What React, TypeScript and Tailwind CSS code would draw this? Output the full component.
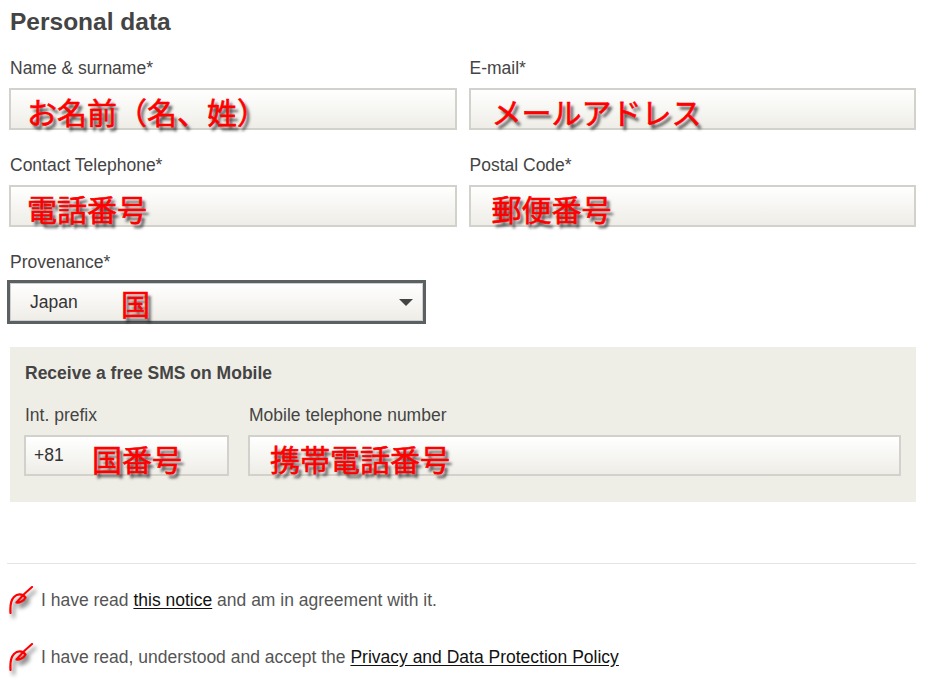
import type { ReactNode } from "react";

const red =
  "text-[#ff0000] [text-shadow:3px_4px_3px_rgba(0,0,0,0.7)] [-webkit-text-stroke:0.6px_#ff0000] [font-family:'Noto_Sans_CJK_JP',sans-serif]";

function Field({ label, children }: { label: string; children: ReactNode }) {
  return (
    <div>
      <div className="text-[17.5px] leading-[20px] text-[#444] pl-[1px]">{label}</div>
      {children}
    </div>
  );
}

function Box({ note, pad = "pl-[16px]", h = "h-[42px]", children }: { note: string; pad?: string; h?: string; children?: ReactNode }) {
  return (
    <div
      className={`mt-[10px] ${h} flex items-center border-2 border-[#d2d1cc] bg-gradient-to-b from-white to-[#eeede7] ${pad}`}
    >
      {children}
      <span className={`text-[30px] leading-none pt-[4px] ${red}`}>{note}</span>
    </div>
  );
}

function Tick() {
  return (
    <svg
      width="26"
      height="28"
      viewBox="0 0 26 28"
      className="shrink-0 [filter:drop-shadow(3px_4px_2px_rgba(0,0,0,0.6))]"
    >
      <path
        d="M1.5 27 C1 20 2 14 5 11 C8 8 13 7 16.5 11.5 C15 15 10 17 7.5 16.5 C12 11 18 5 23 1"
        fill="none"
        stroke="#ff0000"
        strokeWidth="2.2"
        strokeLinecap="round"
        strokeLinejoin="round"
      />
    </svg>
  );
}

export default function App() {
  return (
    <div className="min-h-screen bg-white pt-[8px] pl-[9px] pr-[12px] [font-family:'Liberation_Sans',Arial,sans-serif]">
      <h1 className="text-[24.5px] leading-[28px] font-bold text-[#444] pl-[1px]">Personal data</h1>

      <div className="mt-[22px] grid grid-cols-2 gap-x-[12px] gap-y-[25px]">
        <Field label="Name & surname*">
          <Box note="お名前（名、姓）" />
        </Field>
        <Field label="E-mail*">
          <Box note="メールアドレス" pad="pl-[21px]" />
        </Field>
        <Field label="Contact Telephone*">
          <Box note="電話番号" />
        </Field>
        <Field label="Postal Code*">
          <Box note="郵便番号" pad="pl-[21px]" />
        </Field>
      </div>

      <div className="mt-[25px] pl-[1px] text-[17.5px] leading-[20px] text-[#444]">Provenance*</div>
      <div className="mt-[8px] ml-[-2px] w-[419px] h-[44px] border-[3px] border-[#5b6062]">
        <div className="h-full flex items-center border border-[#cfcfcf] bg-gradient-to-b from-white to-[#eeede7] pl-[19px] pr-[8px]">
          <span className="text-[17.5px] text-[#333] w-[91px]">Japan</span>
          <span className={`text-[29px] leading-none pt-[2px] ${red}`}>国</span>
          <span className="ml-auto mr-[1px] w-0 h-0 border-l-[7px] border-r-[7px] border-t-[7px] border-l-transparent border-r-transparent border-t-[#444]" />
        </div>
      </div>

      <div className="mt-[23px] ml-[1px] bg-[#efeee6] pt-[16px] pb-[26px] pl-[14px] pr-[15px]">
        <div className="text-[17.5px] leading-[20px] font-bold text-[#444] pl-[1px]">Receive a free SMS on Mobile</div>
        <div className="mt-[22px] flex gap-[19px]">
          <div className="w-[205px]">
            <div className="text-[17.5px] leading-[20px] text-[#444] pl-[1px]">Int. prefix</div>
            <Box note="国番号" pad="pl-[8px]" h="h-[41px]">
              <span className="text-[17.5px] text-[#333] w-[58px]">+81</span>
            </Box>
          </div>
          <div className="flex-1">
            <div className="text-[17.5px] leading-[20px] text-[#444] pl-[1px]">Mobile telephone number</div>
            <Box note="携帯電話番号" pad="pl-[20px]" h="h-[41px]" />
          </div>
        </div>
      </div>

      <div className="mt-[61px] ml-[-2px] border-t border-[#e4e4e4]" />

      <div className="mt-[22px] flex items-center gap-[6px] text-[17.5px] leading-[20px] text-[#555]">
        <Tick />
        <span>
          I have read <span className="text-[#111] underline underline-offset-2">this notice</span> and am in agreement with it.
        </span>
      </div>
      <div className="mt-[29px] flex items-center gap-[6px] text-[17.5px] leading-[20px] text-[#555]">
        <Tick />
        <span>
          I have read, understood and accept the{" "}
          <span className="text-[#111] underline underline-offset-2">Privacy and Data Protection Policy</span>
        </span>
      </div>
    </div>
  );
}
